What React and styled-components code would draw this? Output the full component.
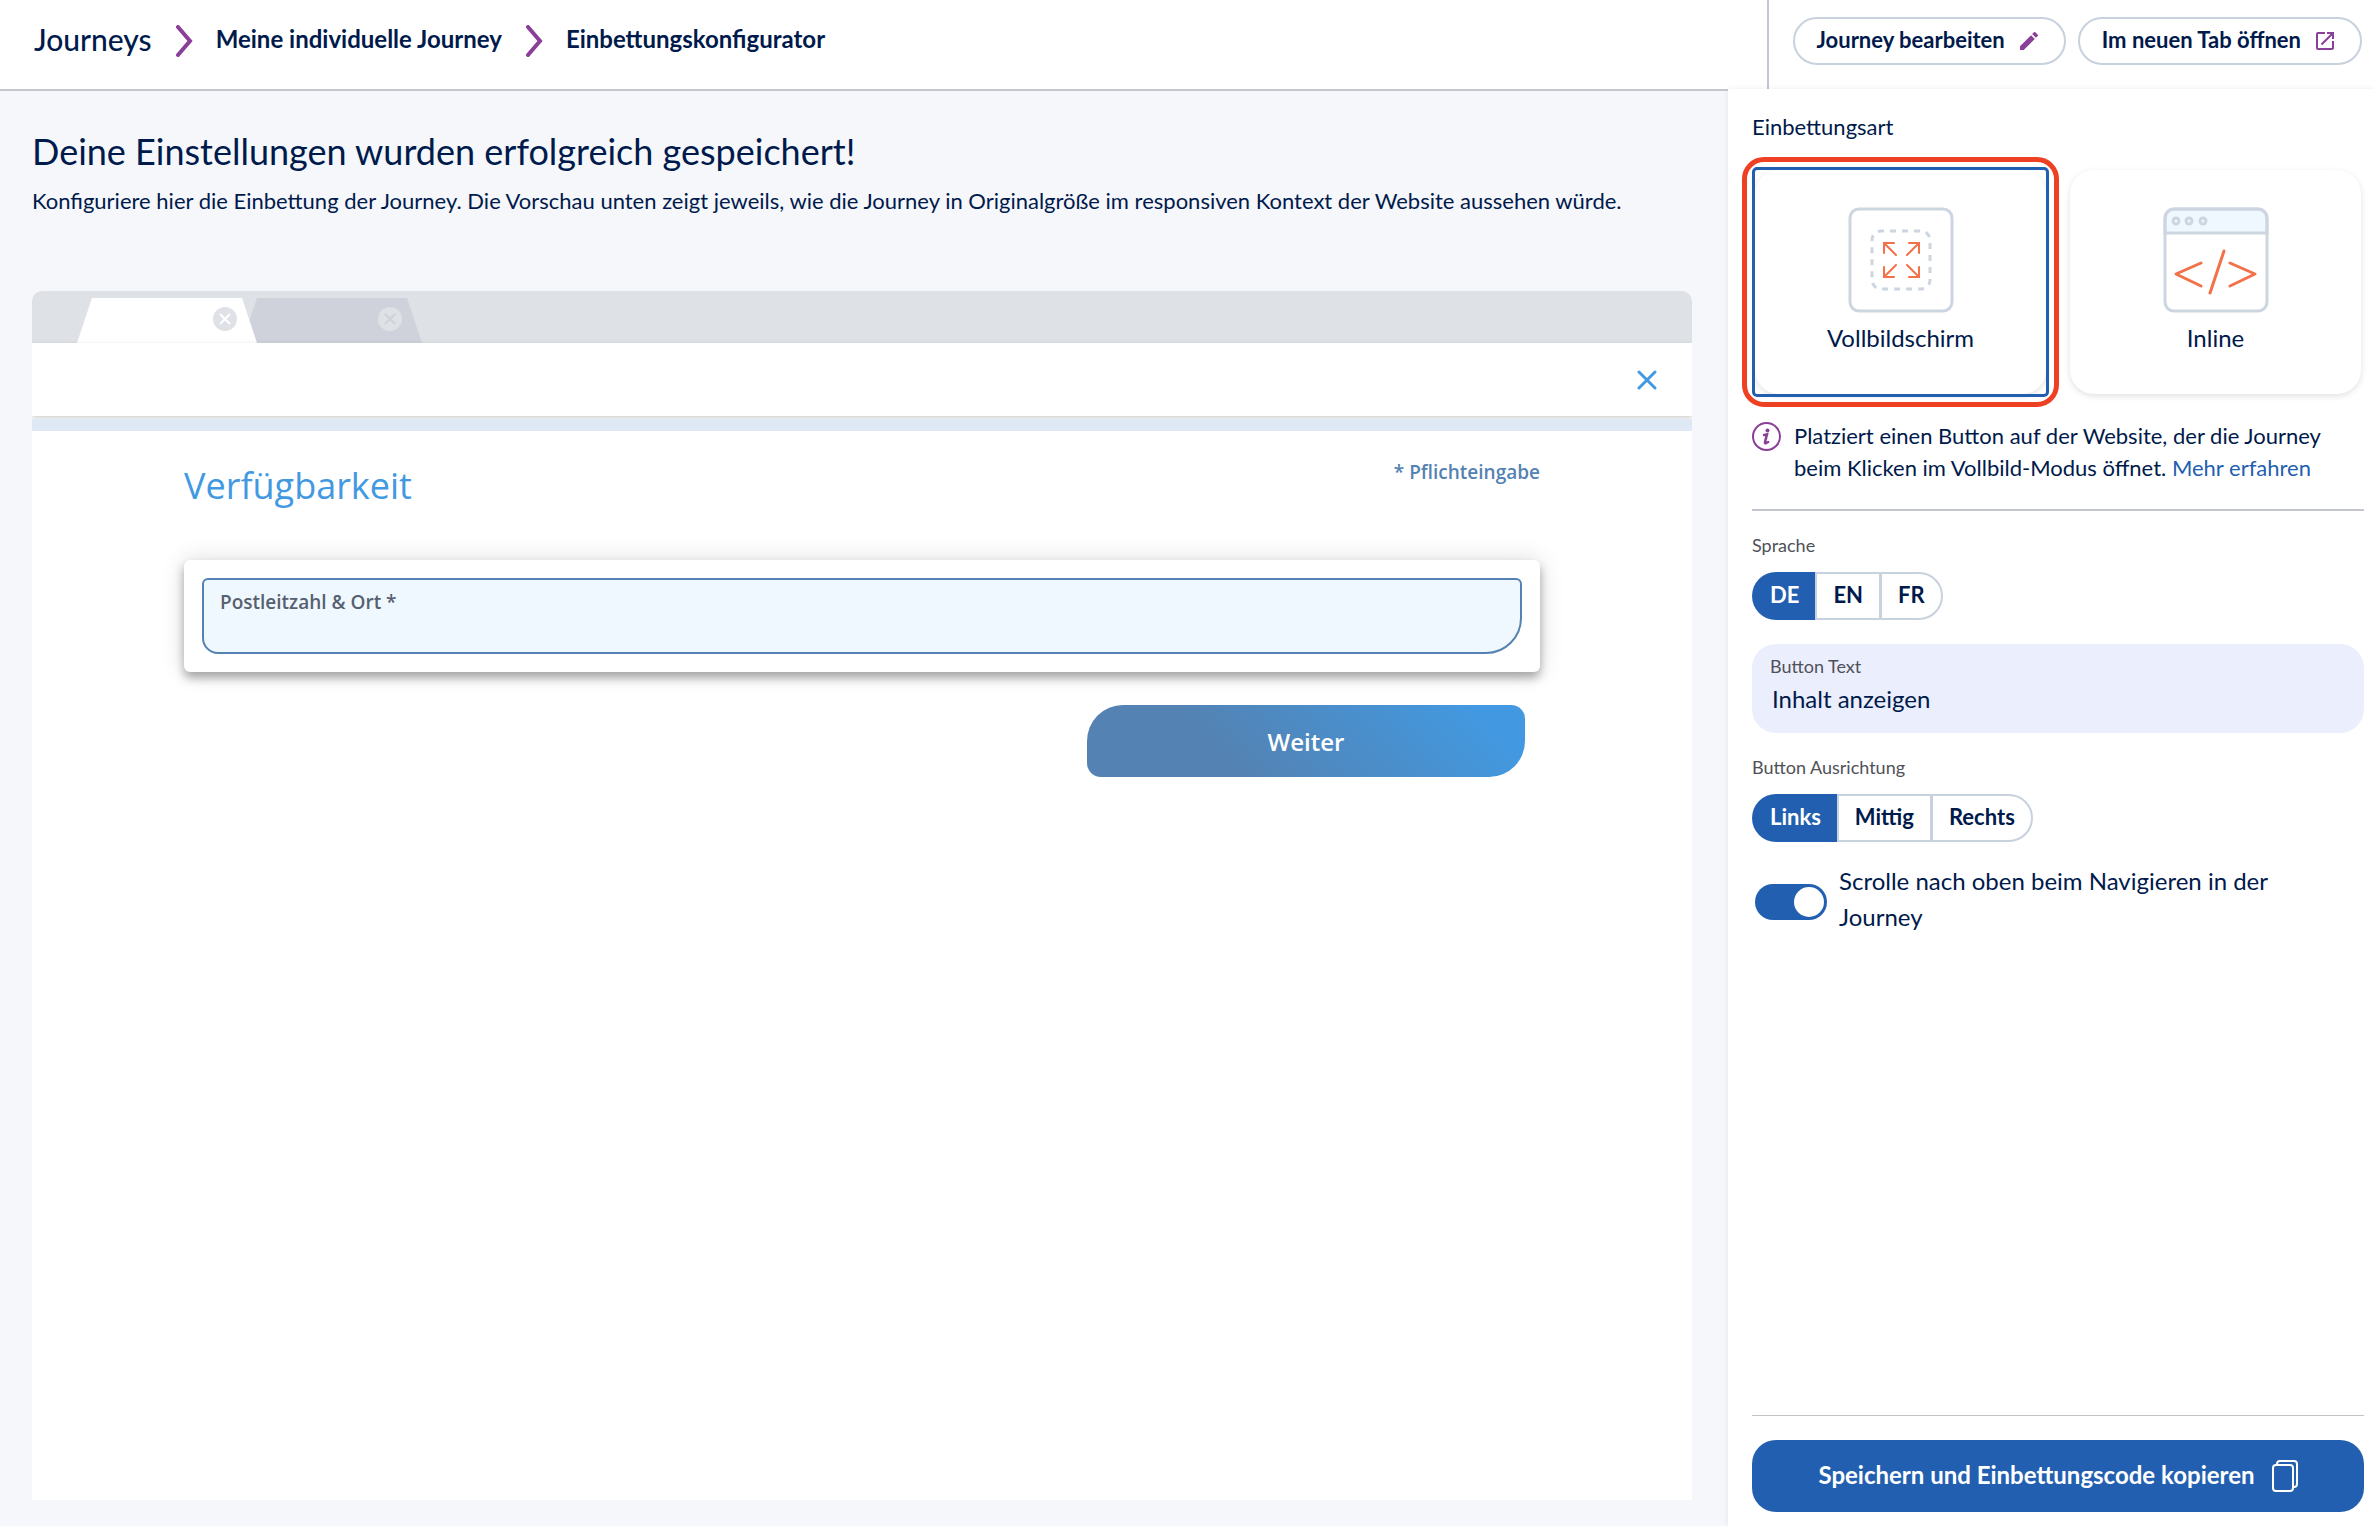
import React, { useState } from "react"
import styled, { createGlobalStyle } from "styled-components"

const colors = {
  navy: "#001a4b",
  blue: "#235fb0",
  purple: "#8a3f98",
  line: "#c3c6cf",
  outline: "#c8d1de",
  orange: "#f27149",
  grey: "#4f5158",
  sky: "#4299e1",
  steel: "#5482b2",
}

const GlobalStyle = createGlobalStyle`
  *, *::before, *::after {
    box-sizing: border-box;
  }

  body {
    margin: 0;
    background: #ffffff;
    color: ${colors.navy};
    font-family: Lato, "Liberation Sans", sans-serif;
  }

  button, input {
    font-family: inherit;
    color: inherit;
  }

  button {
    cursor: pointer;
  }
`

const Page = styled.div`
  display: flex;
  flex-direction: column;
  min-height: 100vh;
`

const Header = styled.header`
  display: flex;
  justify-content: space-between;
  height: 89px;
`

const Breadcrumbs = styled.nav`
  display: flex;
  align-items: center;
  gap: 23px;
  padding: 0 0 8px 34px;

  svg {
    display: block;
  }
`

const Crumb = styled.a`
  padding-bottom: 3px;
  color: ${colors.navy};
  font-size: ${props => (props.$root ? "30px" : "24px")};
  font-weight: ${props => (props.$root ? 500 : 700)};
  line-height: 36px;
  text-decoration: none;
  white-space: nowrap;
`

const HeaderActions = styled.div`
  display: flex;
  align-items: flex-start;
  gap: 12px;
  padding: 17px 12px 0 24px;
  border-left: 2px solid ${colors.line};
`

const PillButton = styled.button`
  display: flex;
  align-items: center;
  gap: 15px;
  height: 48px;
  padding: 0 26px 0 22px;
  background: #ffffff;
  border: 2px solid ${colors.outline};
  border-radius: 24px;
  font-size: 22px;
  font-weight: 700;
  white-space: nowrap;
`

const ButtonLabel = styled.span`
  padding-bottom: 3px;
`

const Body = styled.div`
  display: flex;
  flex: 1;
`

const Main = styled.main`
  display: flex;
  flex-direction: column;
  flex: 1;
  min-width: 0;
  padding: 36px 36px 26px 32px;
  background: #f5f7fb;
  border-top: 2px solid ${colors.line};
`

const Title = styled.h1`
  margin: 0;
  font-size: 36px;
  font-weight: 400;
  line-height: 48px;
`

const Subtitle = styled.p`
  margin: 10px 0 74px;
  font-size: 22px;
  line-height: 32px;
`

const Browser = styled.section`
  display: flex;
  flex-direction: column;
  flex: 1;
  background: #ffffff;
  border-radius: 10px 10px 0 0;
  overflow: hidden;
`

const TabBar = styled.div`
  height: 52px;
  padding: 7px 0 0 45px;
  background: #dee1e6;

  svg {
    display: block;
  }
`

const Toolbar = styled.div`
  display: flex;
  justify-content: flex-end;
  align-items: center;
  height: 73px;
  padding-right: 35px;
  box-shadow: 0 2px 5px rgba(0, 0, 0, 0.2);
`

const CloseButton = styled.button`
  display: flex;
  padding: 0;
  background: none;
  border: 0;
`

const ProgressTrack = styled.div`
  height: 12px;
  margin-top: 3px;
  background: #dfe9f5;
`

const Journey = styled.form`
  display: flex;
  flex-direction: column;
  padding: 30px 152px;
  font-family: "Open Sans", "Noto Sans", sans-serif;
`

const JourneyHead = styled.div`
  display: flex;
  justify-content: space-between;
  align-items: flex-start;
  margin-bottom: 49px;
`

const JourneyTitle = styled.h2`
  margin: 0;
  color: ${colors.sky};
  font-size: 36px;
  font-weight: 400;
  line-height: 50px;
`

const Required = styled.span`
  color: ${colors.steel};
  font-size: 19px;
  font-weight: 600;
  line-height: 22px;
`

const Card = styled.div`
  padding: 18px;
  background: #ffffff;
  border-radius: 6px;
  box-shadow: 0 6px 10px rgba(0, 0, 0, 0.3), 0 0 24px rgba(0, 0, 0, 0.14);
`

const PlaceField = styled.label`
  display: flex;
  flex-direction: column;
  height: 76px;
  padding: 10px 16px 4px;
  background: #f0f8ff;
  border: 2px solid ${colors.steel};
  border-radius: 6px 6px 36px 16px;
  color: #56606f;
  font-size: 19px;
  font-weight: 600;
  line-height: 24px;
`

const PlaceInput = styled.input`
  flex: 1;
  min-height: 0;
  padding: 0;
  background: transparent;
  border: 0;
  outline: 0;
  font-size: 19px;
`

const NextButton = styled.button`
  align-self: flex-end;
  width: 438px;
  height: 72px;
  margin: 33px 15px 0 0;
  background: linear-gradient(45deg, #5482b2 30%, #4299e1 90%);
  border: 0;
  border-radius: 36px 14px 36px 14px;
  color: #ffffff;
  font-size: 24px;
  font-weight: 600;
`

const Sidebar = styled.aside`
  display: flex;
  flex-direction: column;
  width: 646px;
  padding: 24px 10px 14px 24px;
  background: #ffffff;
  box-shadow: 0 0 6px rgba(0, 0, 0, 0.08);
`

const Heading = styled.h2`
  margin: 0 0 29px;
  font-size: 22px;
  font-weight: 400;
  line-height: 28px;
`

const Cards = styled.div`
  display: grid;
  grid-template-columns: 1fr 1fr;
  gap: 24px;
  padding: 0 3px;
`

const TypeCard = styled.button`
  position: relative;
  display: flex;
  flex-direction: column;
  align-items: center;
  height: 224px;
  padding: 37px 0 0;
  background: #ffffff;
  border: 0;
  border-radius: 24px;
  box-shadow: 0 2px 6px rgba(0, 0, 0, 0.12);
  font-size: 24px;
  line-height: 32px;

  svg {
    margin-bottom: 9px;
  }

  &[aria-pressed="true"]::before {
    content: "";
    position: absolute;
    inset: -3px;
    border: 3px solid ${colors.blue};
    border-radius: 5px;
  }

  &[aria-pressed="true"]::after {
    content: "";
    position: absolute;
    inset: -13px;
    border: 5px solid #ee4023;
    border-radius: 22px;
  }
`

const Info = styled.div`
  display: flex;
  gap: 13px;
  margin-top: 26px;
  padding-bottom: 25px;
  border-bottom: 2px solid ${colors.line};

  svg {
    flex: none;
    margin-top: 2px;
  }
`

const InfoText = styled.p`
  margin: 0;
  padding-right: 24px;
  font-size: 22px;
  line-height: 32px;
`

const Link = styled.a`
  color: ${colors.blue};
  text-decoration: none;
`

const Group = styled.fieldset`
  margin: 22px 0 0;
  padding: 0;
  border: 0;
`

const Legend = styled.legend`
  margin-bottom: 15px;
  padding: 0;
  color: ${colors.grey};
  font-size: 18px;
  line-height: 24px;
`

const Segments = styled.div`
  display: flex;
`

const Segment = styled.button`
  height: 48px;
  padding: 0 16px 3px;
  background: ${props => (props.$active ? colors.blue : "#ffffff")};
  border: 2px solid ${props => (props.$active ? colors.blue : colors.outline)};
  color: ${props => (props.$active ? "#ffffff" : colors.navy)};
  font-size: 22px;
  font-weight: 700;

  &:not(:last-child) {
    border-right-width: ${props => (props.$active ? "0" : "1px")};
  }

  &:first-child {
    border-radius: 24px 0 0 24px;
  }

  &:last-child {
    border-radius: 0 24px 24px 0;
  }
`

const TextField = styled.label`
  display: flex;
  flex-direction: column;
  gap: 4px;
  margin-top: 24px;
  padding: 10px 18px 19px;
  background: #ebeefd;
  border-radius: 24px;
  color: ${colors.grey};
  font-size: 18px;
  line-height: 24px;
`

const TextInput = styled.input`
  height: 32px;
  padding: 0 2px;
  background: transparent;
  border: 0;
  outline: 0;
  color: ${colors.navy};
  font-size: 24px;
`

const SwitchRow = styled.label`
  display: flex;
  align-items: flex-start;
  gap: 12px;
  margin-top: 21px;
  padding: 0 70px 0 3px;
  font-size: 24px;
  line-height: 36px;
`

const Switch = styled.input`
  appearance: none;
  flex: none;
  display: flex;
  justify-content: ${props => (props.checked ? "flex-end" : "flex-start")};
  width: 72px;
  height: 36px;
  margin: 21px 0 0;
  padding: 3px;
  background: ${props => (props.checked ? colors.blue : colors.outline)};
  border-radius: 18px;

  &::before {
    content: "";
    width: 30px;
    height: 30px;
    background: #ffffff;
    border-radius: 50%;
  }
`

const SidebarFooter = styled.footer`
  margin-top: auto;
  padding-top: 24px;
  border-top: 1px solid #c4c4c4;
`

const SaveButton = styled.button`
  display: flex;
  justify-content: center;
  align-items: center;
  gap: 17px;
  width: 100%;
  height: 72px;
  padding: 0;
  background: ${colors.blue};
  border: 0;
  border-radius: 24px;
  color: #ffffff;
  font-size: 24px;
  font-weight: 700;
`

const Chevron = () => (
  <svg width="18" height="32" viewBox="0 0 18 32" fill="none" stroke={colors.purple} strokeWidth="4">
    <path d="M3 2l12 14L3 30" strokeLinecap="round" />
  </svg>
)

const PencilIcon = () => (
  <svg width="18" height="18" viewBox="3 3 18 18" fill={colors.purple}>
    <path d="M3 17.25V21h3.75L17.81 9.94l-3.75-3.75L3 17.25zM20.71 7.04a1 1 0 0 0 0-1.41l-2.34-2.34a1 1 0 0 0-1.41 0l-1.83 1.83 3.75 3.75 1.83-1.83z" />
  </svg>
)

const OpenIcon = () => (
  <svg width="18" height="18" viewBox="3 3 18 18" fill={colors.purple}>
    <path d="M19 19H5V5h7V3H5a2 2 0 0 0-2 2v14a2 2 0 0 0 2 2h14c1.1 0 2-.9 2-2v-7h-2v7zM14 3v2h3.59l-9.83 9.83 1.41 1.41L19 6.41V10h2V3h-7z" />
  </svg>
)

const TabShapes = () => (
  <svg width="345" height="45" viewBox="0 0 345 45" fill="none" strokeWidth="2">
    <path d="M180 0h150l15 45H165z" fill="#cfd2da" />
    <path d="M15 0h150l15 45H0z" fill="#ffffff" />
    <circle cx="148" cy="21" r="12" fill="#dee1e6" />
    <path d="M143 16l10 10M153 16l-10 10" stroke="#ffffff" />
    <circle cx="313" cy="21" r="12" fill="#dee1e6" />
    <path d="M308 16l10 10M318 16l-10 10" stroke="#cfd2da" />
  </svg>
)

const CloseIcon = () => (
  <svg width="20" height="20" viewBox="0 0 20 20" stroke={colors.sky} strokeWidth="3" strokeLinecap="round">
    <path d="M2 2l16 16M18 2L2 18" />
  </svg>
)

const FullscreenIcon = () => (
  <svg width="106" height="106" viewBox="0 0 106 106" fill="none" strokeWidth="3">
    <rect x="2" y="2" width="102" height="102" rx="9" stroke="#cdd6e0" />
    <rect
      x="24"
      y="24"
      width="58"
      height="58"
      rx="9"
      stroke="#cdd6e0"
      strokeDasharray="6 6"
      strokeDashoffset="3"
    />
    <path
      d="M36 46V36h10M36 36l12 12M61 36h10v10M71 36L59 48M36 60v10h10M36 70l12-12M61 70h10V60M71 70L59 58"
      stroke={colors.orange}
      strokeWidth="2"
      strokeLinecap="round"
    />
  </svg>
)

const InlineIcon = () => (
  <svg width="106" height="106" viewBox="0 0 106 106" fill="none" stroke="#cdd6e0" strokeWidth="3">
    <path d="M2 26V11a9 9 0 0 1 9-9h84a9 9 0 0 1 9 9v15z" fill="#f0f8ff" />
    <rect x="2" y="2" width="102" height="102" rx="9" />
    <circle cx="13" cy="14" r="3" />
    <circle cx="26" cy="14" r="3" />
    <circle cx="40" cy="14" r="3" />
    <path
      d="M38 56L13 67l25 12M61 44L47 86M67 56l25 11-25 12"
      stroke={colors.orange}
      strokeLinecap="round"
      strokeLinejoin="round"
    />
  </svg>
)

const InfoIcon = () => (
  <svg width="29" height="29" viewBox="0 0 29 29" fill="none" stroke={colors.purple}>
    <circle cx="14.5" cy="14.5" r="13.5" strokeWidth="2" />
    <circle cx="15.5" cy="8.5" r="2" fill={colors.purple} stroke="none" />
    <path d="M12 13l3-.6-2 7.6q-.3 1.600 1 1.200l2.200-1.200" strokeWidth="2.5" strokeLinecap="round" />
  </svg>
)

const CopyIcon = () => (
  <svg width="26" height="32" viewBox="0 0 26 32" fill="none" stroke="#ffffff" strokeWidth="2">
    <rect x="1" y="5" width="20" height="26" rx="3" />
    <path d="M5 5V4a3 3 0 0 1 3-3h14a3 3 0 0 1 3 3v20a3 3 0 0 1-3 3h-1" />
  </svg>
)

const SegmentedControl = ({ label, options, value, onChange }) => (
  <Group>
    <Legend>{label}</Legend>
    <Segments>
      {options.map(option => (
        <Segment
          type="button"
          key={option}
          $active={option === value}
          aria-pressed={option === value}
          onClick={() => onChange(option)}
        >
          {option}
        </Segment>
      ))}
    </Segments>
  </Group>
)

const Preview = () => (
  <Browser>
    <TabBar>
      <TabShapes />
    </TabBar>
    <Toolbar>
      <CloseButton type="button" aria-label="Schließen">
        <CloseIcon />
      </CloseButton>
    </Toolbar>
    <ProgressTrack />
    <Journey onSubmit={e => e.preventDefault()}>
      <JourneyHead>
        <JourneyTitle>Verfügbarkeit</JourneyTitle>
        <Required>* Pflichteingabe</Required>
      </JourneyHead>
      <Card>
        <PlaceField>
          Postleitzahl &amp; Ort *
          <PlaceInput type="text" />
        </PlaceField>
      </Card>
      <NextButton type="submit">Weiter</NextButton>
    </Journey>
  </Browser>
)

const App = () => {
  const [embedType, setEmbedType] = useState("fullscreen")
  const [language, setLanguage] = useState("DE")
  const [buttonText, setButtonText] = useState("Inhalt anzeigen")
  const [alignment, setAlignment] = useState("Links")
  const [scrollTop, setScrollTop] = useState(true)

  return (
    <Page>
      <GlobalStyle />
      <Header>
        <Breadcrumbs>
          <Crumb href="#journeys" $root>
            Journeys
          </Crumb>
          <Chevron />
          <Crumb href="#journey">Meine individuelle Journey</Crumb>
          <Chevron />
          <Crumb href="#embed">Einbettungskonfigurator</Crumb>
        </Breadcrumbs>
        <HeaderActions>
          <PillButton type="button">
            <ButtonLabel>Journey bearbeiten</ButtonLabel>
            <PencilIcon />
          </PillButton>
          <PillButton type="button">
            <ButtonLabel>Im neuen Tab öffnen</ButtonLabel>
            <OpenIcon />
          </PillButton>
        </HeaderActions>
      </Header>
      <Body>
        <Main>
          <Title>Deine Einstellungen wurden erfolgreich gespeichert!</Title>
          <Subtitle>
            Konfiguriere hier die Einbettung der Journey. Die Vorschau unten zeigt jeweils, wie die
            Journey in Originalgröße im responsiven Kontext der Website aussehen würde.
          </Subtitle>
          <Preview />
        </Main>
        <Sidebar>
          <Heading>Einbettungsart</Heading>
          <Cards>
            <TypeCard
              type="button"
              aria-pressed={embedType === "fullscreen"}
              onClick={() => setEmbedType("fullscreen")}
            >
              <FullscreenIcon />
              Vollbildschirm
            </TypeCard>
            <TypeCard
              type="button"
              aria-pressed={embedType === "inline"}
              onClick={() => setEmbedType("inline")}
            >
              <InlineIcon />
              Inline
            </TypeCard>
          </Cards>
          <Info>
            <InfoIcon />
            <InfoText>
              Platziert einen Button auf der Website, der die Journey beim Klicken im Vollbild-Modus
              öffnet. <Link href="#mehr">Mehr erfahren</Link>
            </InfoText>
          </Info>
          <SegmentedControl
            label="Sprache"
            options={["DE", "EN", "FR"]}
            value={language}
            onChange={setLanguage}
          />
          <TextField>
            Button Text
            <TextInput
              type="text"
              value={buttonText}
              onChange={e => setButtonText(e.target.value)}
            />
          </TextField>
          <SegmentedControl
            label="Button Ausrichtung"
            options={["Links", "Mittig", "Rechts"]}
            value={alignment}
            onChange={setAlignment}
          />
          <SwitchRow>
            <Switch
              type="checkbox"
              role="switch"
              checked={scrollTop}
              onChange={e => setScrollTop(e.target.checked)}
            />
            Scrolle nach oben beim Navigieren in der Journey
          </SwitchRow>
          <SidebarFooter>
            <SaveButton type="button">
              <ButtonLabel>Speichern und Einbettungscode kopieren</ButtonLabel>
              <CopyIcon />
            </SaveButton>
          </SidebarFooter>
        </Sidebar>
      </Body>
    </Page>
  )
}

export default App
